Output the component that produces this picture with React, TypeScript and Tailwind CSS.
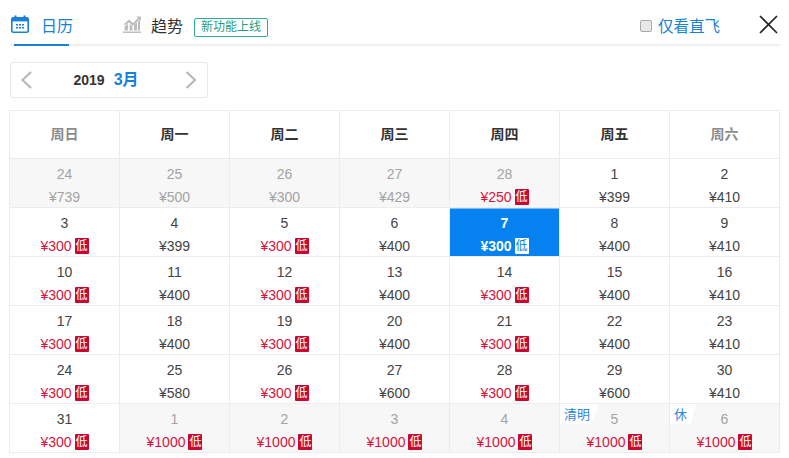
import React from 'react';

type Day = {
  day: number;
  price: number;
  low?: boolean;
  off?: boolean;
  active?: boolean;
  tag?: string;
};

const weekdays = [
  { label: '周日', weekend: true },
  { label: '周一' },
  { label: '周二' },
  { label: '周三' },
  { label: '周四' },
  { label: '周五' },
  { label: '周六', weekend: true },
];

const days: Day[] = [
  { day: 24, price: 739, off: true },
  { day: 25, price: 500, off: true },
  { day: 26, price: 300, off: true },
  { day: 27, price: 429, off: true },
  { day: 28, price: 250, off: true, low: true },
  { day: 1, price: 399 },
  { day: 2, price: 410 },
  { day: 3, price: 300, low: true },
  { day: 4, price: 399 },
  { day: 5, price: 300, low: true },
  { day: 6, price: 400 },
  { day: 7, price: 300, low: true, active: true },
  { day: 8, price: 400 },
  { day: 9, price: 410 },
  { day: 10, price: 300, low: true },
  { day: 11, price: 400 },
  { day: 12, price: 300, low: true },
  { day: 13, price: 400 },
  { day: 14, price: 300, low: true },
  { day: 15, price: 400 },
  { day: 16, price: 410 },
  { day: 17, price: 300, low: true },
  { day: 18, price: 400 },
  { day: 19, price: 300, low: true },
  { day: 20, price: 400 },
  { day: 21, price: 300, low: true },
  { day: 22, price: 400 },
  { day: 23, price: 410 },
  { day: 24, price: 300, low: true },
  { day: 25, price: 580 },
  { day: 26, price: 300, low: true },
  { day: 27, price: 600 },
  { day: 28, price: 300, low: true },
  { day: 29, price: 600 },
  { day: 30, price: 410 },
  { day: 31, price: 300, low: true },
  { day: 1, price: 1000, low: true, off: true },
  { day: 2, price: 1000, low: true, off: true },
  { day: 3, price: 1000, low: true, off: true },
  { day: 4, price: 1000, low: true, off: true },
  { day: 5, price: 1000, low: true, off: true, tag: '清明' },
  { day: 6, price: 1000, low: true, off: true, tag: '休' },
];

const CalendarIcon = () => (
  <svg className="mb-[6px]" width="18" height="18" viewBox="0 0 18 18">
    <rect x="0.8" y="2.8" width="16.4" height="14.4" rx="1.5" fill="none" stroke="#1a7fd6" strokeWidth="1.6" />
    <rect x="0.8" y="2.8" width="16.4" height="3.6" fill="#1a7fd6" />
    <rect x="3.5" y="0.5" width="2" height="4" fill="#1a7fd6" />
    <rect x="12.5" y="0.5" width="2" height="4" fill="#1a7fd6" />
    <path d="M5 9h2v1.6H5zM8 9h2v1.6H8zM11 9h2v1.6h-2zM5 12h2v1.6H5zM8 12h2v1.6H8zM11 12h2v1.6h-2z" fill="#1a7fd6" />
  </svg>
);

const TrendIcon = () => (
  <svg className="mb-[6px]" width="18" height="18" viewBox="0 0 18 18" fill="#bdbdbd">
    <path d="M0 16.5h18V18H0z" />
    <path d="M1.5 15.5v-4L5 9v6.500zM6.500 15.500V9l3 2.500v4zM11 15.500V10l3-2.500v8zM15 15.500V6.500l2-1.500v10.500z" />
    <path d="M1 9 6 4.500l4 3.500L15 3l-1.500-1.500H18V6l-1.500-1.500-6.500 6.500-4-3.500L2 10.500z" />
  </svg>
);

const Chevron = ({ right }: { right?: boolean }) => (
  <svg width="12" height="18" viewBox="0 0 12 18" fill="none" stroke="#b5b5b5" strokeWidth="2">
    <path d={right ? 'M1.500 1 10 9l-8.500 8' : 'M10 1 1.500 9l8.500 8'} />
  </svg>
);

const DayCell = ({ item }: { item: Day }) => {
  const bg = item.active ? 'bg-[#0582f0] shadow-[inset_0_1px_0_#7fbdf5]' : item.off ? 'bg-[#f7f7f7]' : 'bg-white';
  const dayColor = item.active ? 'text-white font-bold' : item.off ? 'text-[#a3a3a3]' : 'text-[#444]';
  const priceColor = item.active
    ? 'text-white font-bold'
    : item.low
      ? 'text-[#d8143c]'
      : item.off
        ? 'text-[#a3a3a3]'
        : 'text-[#444]';

  return (
    <div className={`relative h-[49px] border-r border-b border-[#ececec] flex flex-col items-center pt-[5px] text-[14px] leading-[20px] ${bg}`}>
      {item.tag && (
        <span className="absolute left-0 top-0 h-[20px] pl-[4px] pr-[9px] bg-white text-[13px] leading-[21px] text-[#2f86d6] [clip-path:polygon(0_0,100%_0,80%_100%,0_100%)]">
          {item.tag}
        </span>
      )}
      <span className={dayColor}>{item.day}</span>
      <div className="flex items-center gap-[3px] mt-[3px]">
        <span className={priceColor}>¥{item.price}</span>
        {item.low && (
          <span
            className={`w-[14px] h-[16px] rounded-[1px] text-[12px] leading-[16px] text-center ${
              item.active ? 'bg-white text-[#0582f0]' : 'bg-[#c9082f] text-white'
            }`}
          >
            低
          </span>
        )}
      </div>
    </div>
  );
};

const App: React.FC = () => {
  return (
    <div className="w-[789px] h-[458px] overflow-hidden bg-white pl-[10px] pr-[9px] font-['Liberation_Sans','Noto_Sans_CJK_SC',sans-serif]">
      <div className="relative flex items-center h-[46px] pt-[10px] border-b-2 border-[#f0f0f0]">
        <div className="relative flex items-center gap-[12px] pl-[1px] h-full w-[113px]">
          <CalendarIcon />
          <span className="text-[16px] text-[#1a7fd6]">日历</span>
          <span className="absolute left-[4px] -bottom-[2px] w-[55px] h-[2px] bg-[#1a7fd6]" />
        </div>
        <div className="flex items-center gap-[10px] h-full">
          <TrendIcon />
          <span className="text-[16px] text-[#333]">趋势</span>
        </div>
        <span className="ml-[11px] h-[19px] w-[74px] border border-[#2fae8f] rounded-[2px] text-[12px] leading-[17px] text-center text-[#1f9c7e]">
          新功能上线
        </span>
        <label className="ml-auto flex items-center gap-[6px] mr-[60px]">
          <span className="w-[12px] h-[12px] mb-[2px] rounded-[2px] border border-[#aaa] bg-[#e8e8e8]" />
          <span className="text-[15.5px] text-[#1a7fd6]">仅看直飞</span>
        </label>
        <svg className="absolute right-[2px] top-[15px]" width="19" height="19" viewBox="0 0 19 19" stroke="#222" strokeWidth="1.7">
          <path d="M1 1l17 17M18 1 1 18" />
        </svg>
      </div>

      <div className="mt-[16px] w-[198px] h-[36px] border border-[#e8e8e8] rounded-[3px] flex items-center justify-between px-[10px]">
        <Chevron />
        <div className="flex items-baseline gap-[9px] mr-[6px]">
          <span className="text-[14px] font-bold text-[#333]">2019</span>
          <span className="text-[16px] font-bold text-[#1a7fd6]">3月</span>
        </div>
        <Chevron right />
      </div>

      <div className="mt-[12px] -ml-[1px] w-[771px] border-t border-l border-[#ececec] grid grid-cols-[110px_110px_110px_110px_110px_110px_110px]">
        {weekdays.map((w) => (
          <div
            key={w.label}
            className={`h-[48px] border-r border-b border-[#ececec] flex items-center justify-center text-[14px] font-bold ${
              w.weekend ? 'text-[#8c8c8c]' : 'text-[#333]'
            }`}
          >
            {w.label}
          </div>
        ))}
        {days.map((d, i) => (
          <DayCell key={i} item={d} />
        ))}
      </div>
    </div>
  );
};

export default App;
